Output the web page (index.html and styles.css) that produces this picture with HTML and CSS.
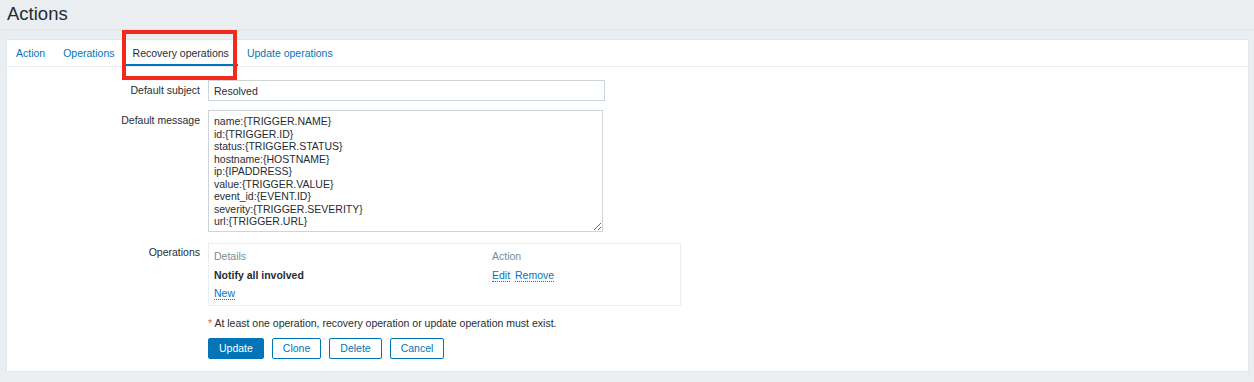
FILE: index.html
```html
<!DOCTYPE html>
<html lang="en">
<head>
  <meta charset="UTF-8" />
  <title>Actions</title>
  <link rel="stylesheet" href="styles.css">
</head>
<body>
  <!-- Page header -->
  <div class="page-header">
    <h1>Actions</h1>
  </div>

  <!-- Action form -->
  <div class="card">
    <ul class="tabs">
      <li><a href="#">Action</a></li>
      <li><a href="#">Operations</a></li>
      <li class="active"><a href="#">Recovery operations</a></li>
      <li><a href="#">Update operations</a></li>
    </ul>

    <form class="form">
      <div class="form-row row-subject">
        <label for="subject">Default subject</label>
        <div class="field"><input type="text" id="subject" class="text-input" value="Resolved"></div>
      </div>

      <div class="form-row row-message">
        <label for="message">Default message</label>
        <div class="field"><textarea id="message" class="text-area">name:{TRIGGER.NAME}
id:{TRIGGER.ID}
status:{TRIGGER.STATUS}
hostname:{HOSTNAME}
ip:{IPADDRESS}
value:{TRIGGER.VALUE}
event_id:{EVENT.ID}
severity:{TRIGGER.SEVERITY}
url:{TRIGGER.URL}</textarea></div>
      </div>

      <div class="form-row row-ops">
        <label>Operations</label>
        <div class="field">
          <div class="ops-box">
            <div class="ops-row ops-head">
              <span>Details</span>
              <span>Action</span>
            </div>
            <div class="ops-row">
              <span class="bold">Notify all involved</span>
              <span><a href="#" class="link-action">Edit</a> <a href="#" class="link-action">Remove</a></span>
            </div>
            <div class="ops-row">
              <span><a href="#" class="link-action">New</a></span>
            </div>
          </div>
        </div>
      </div>

      <div class="form-row row-note">
        <span></span>
        <div class="field note"><span class="asterisk">*</span> At least one operation, recovery operation or update operation must exist.</div>
      </div>

      <div class="form-row">
        <span></span>
        <div class="field buttons">
          <button type="button" class="btn btn-main">Update</button>
          <button type="button" class="btn btn-alt">Clone</button>
          <button type="button" class="btn btn-alt">Delete</button>
          <button type="button" class="btn btn-alt">Cancel</button>
        </div>
      </div>
    </form>
  </div>

  <!-- highlight frame around the active tab -->
  <div class="highlight"></div>
</body>
</html>
```

FILE: styles.css
```css
body {
  margin: 0;
  background: #ebeef0;
  font-family: "Liberation Sans", Arial, sans-serif;
  font-size: 10.5px;
  color: #1f2c33;
  position: relative;
}

a {
  color: #0275b8;
  text-decoration: none;
}

/* Header */
.page-header {
  height: 29px;
  border-bottom: 1px solid #e1e5e8;
}

.page-header h1 {
  margin: 0;
  padding-left: 7px;
  font-size: 18.5px;
  font-weight: normal;
  line-height: 28px;
  color: #1f2c33;
}

/* Card */
.card {
  margin: 9px 5px 0 6px;
  background: white;
  border: 1px solid #e3e7ea;
  height: 331px;
}

/* Tabs */
.tabs {
  display: flex;
  list-style: none;
  margin: 0;
  padding: 0;
  height: 26px;
  border-bottom: 1px solid #ebeef0;
}

.tabs li {
  padding: 0 9px;
  line-height: 26px;
  height: 26px;
  box-sizing: border-box;
}

.tabs li.active {
  border-bottom: 2px solid #0275b8;
}

.tabs li.active a {
  color: #1f2c33;
}

/* Form */
.form {
  padding-top: 13px;
}

.form-row {
  display: grid;
  grid-template-columns: 193px 1fr;
  column-gap: 8px;
}

.form-row label {
  text-align: right;
}

.row-subject {
  margin-bottom: 9px;
}

.row-subject label {
  line-height: 21px;
}

.row-message {
  margin-bottom: 11px;
}

.row-message label,
.row-ops label {
  line-height: 12.5px;
  padding-top: 4px;
}

.row-ops label {
  padding-top: 3px;
}

.row-ops {
  margin-bottom: 11px;
}

.row-note {
  margin-bottom: 9px;
}

.text-input {
  box-sizing: border-box;
  width: 397px;
  height: 21px;
  margin: 0;
  padding: 0 5px;
  border: 1px solid #cdd5da;
  font-family: inherit;
  font-size: 10.5px;
  color: #1f2c33;
}

.text-area {
  display: block;
  box-sizing: border-box;
  width: 395px;
  height: 122px;
  margin: 0;
  padding: 4px 5px;
  border: 1px solid #cdd5da;
  font-family: inherit;
  font-size: 10.5px;
  line-height: 12.5px;
  color: #1f2c33;
  overflow: hidden;
  resize: both;
}

/* Operations list */
.ops-box {
  width: 473px;
  box-sizing: border-box;
  border: 1px solid #ebeef0;
  padding: 3px 5px 2px;
}

.ops-row {
  display: grid;
  grid-template-columns: 278px 1fr;
  line-height: 18.5px;
}

.ops-head {
  color: #768d99;
}

.bold {
  font-weight: bold;
}

.link-action {
  border-bottom: 1px dotted #0275b8;
  margin-right: 2px;
}

.note {
  line-height: 12px;
}

.asterisk {
  color: #e45959;
}

/* Buttons */
.buttons {
  display: flex;
  gap: 8px;
}

.btn {
  height: 21px;
  padding: 0 10px;
  border: 1px solid #0275b8;
  border-radius: 2px;
  font-family: inherit;
  font-size: 10.5px;
  cursor: pointer;
}

.btn-main {
  background: #0275b8;
  color: white;
}

.btn-alt {
  background: white;
  color: #0275b8;
}

/* Annotation frame */
.highlight {
  position: absolute;
  left: 122px;
  top: 30px;
  width: 115px;
  height: 50px;
  box-sizing: border-box;
  border: 4px solid #f2291b;
}
```
